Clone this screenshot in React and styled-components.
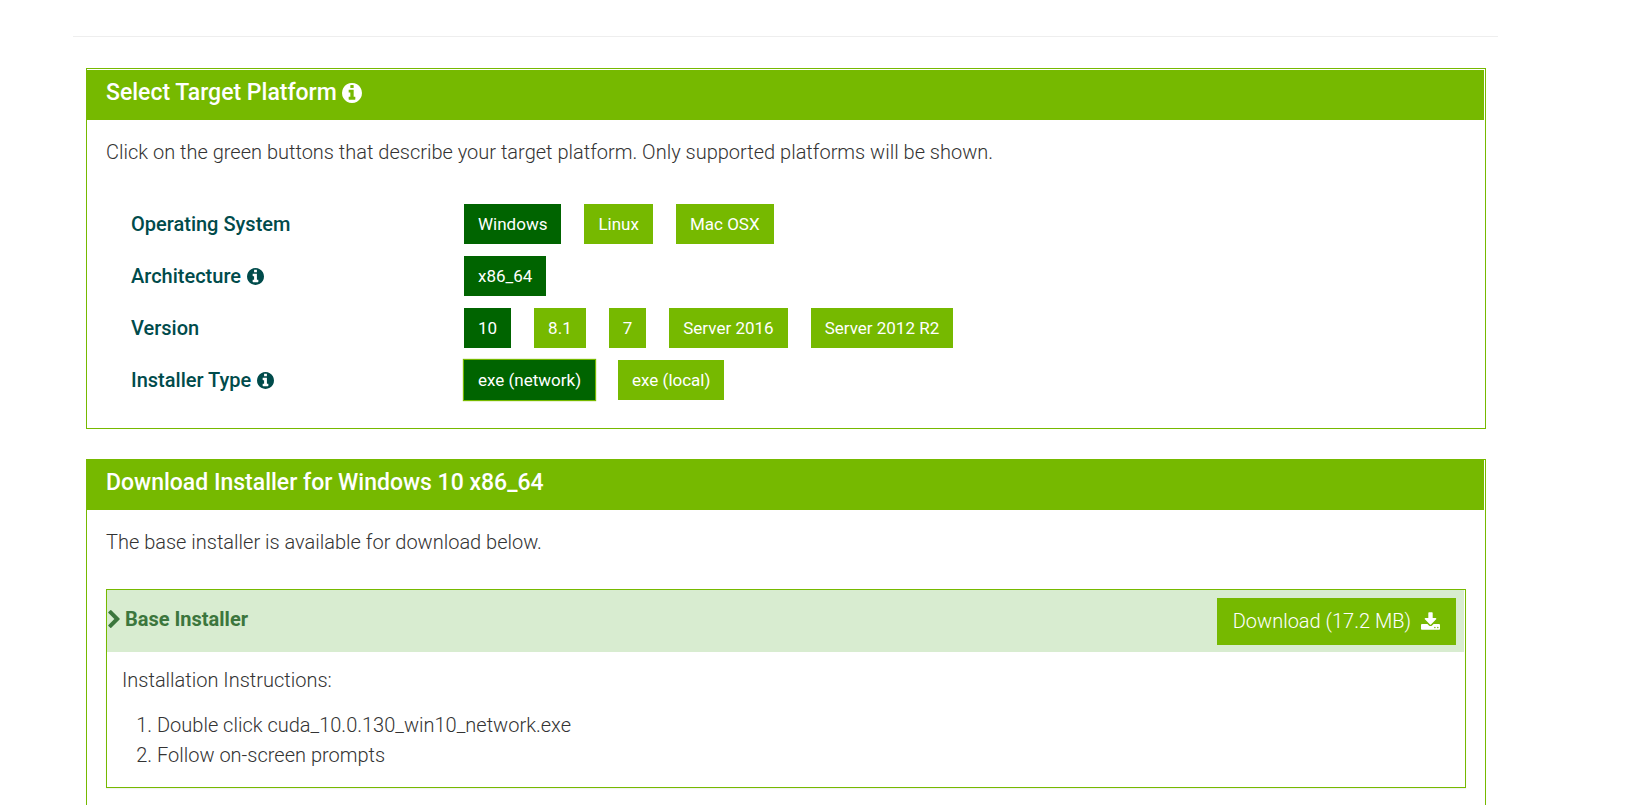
import React, { useState } from "react";
import styled, { createGlobalStyle, css } from "styled-components";

const green = "#76b900";

const GlobalStyle = createGlobalStyle`
  * { box-sizing: border-box; }
  body {
    margin: 0;
    background: #fff;
    color: #333;
    font: 300 20px/30px Roboto, "Liberation Sans", sans-serif;
  }
`;

const Page = styled.main`
  margin: 0 148px 0 73px;
  padding-top: 36px;
`;

const Divider = styled.hr`
  height: 1px;
  margin: 0 0 31px;
  border: 0;
  background: #eee;
`;

const Stack = styled.div`
  display: flex;
  flex-direction: column;
  gap: 30px;
  padding: 0 12px 0 13px;
`;

const Panel = styled.section`
  border: 1px solid ${green};
  padding: ${(p) => (p.$inset ? "1px" : "0")} 1px 0 0;
`;

const PanelTitle = styled.h2`
  display: flex;
  align-items: center;
  gap: 5px;
  height: 50px;
  margin: 0;
  padding: 0 19px 4px;
  background: ${green};
  color: #fff;
  font-size: 23px;
  font-weight: 500;
`;

const PanelBody = styled.div`
  padding: 17px 18px 28px 19px;
`;

const Lead = styled.p`
  margin: 0 0 ${(p) => p.$space};
`;

const Options = styled.div`
  display: flex;
  flex-direction: column;
  gap: 12px;
  padding-left: 25px;
`;

const OptionRow = styled.div`
  display: grid;
  grid-template-columns: 333px 1fr;
  align-items: center;
`;

const OptionLabel = styled.span`
  display: flex;
  align-items: center;
  gap: 6px;
  color: #004b4b;
  font-weight: 500;
`;

const Choices = styled.div`
  display: flex;
  flex-wrap: wrap;
  gap: 12px 23px;
`;

const Choice = styled.button`
  height: 40px;
  padding: 0 14px;
  border: 0;
  background: ${(p) => (p.$active ? "#006400" : green)};
  color: #fff;
  font: 400 17px/40px Roboto, "Liberation Sans", sans-serif;
  cursor: pointer;
  ${(p) =>
    p.$focused &&
    css`
      box-shadow: 0 0 1px 1px ${green};
    `}
  &:focus {
    outline: none;
  }
`;

const Installer = styled.article`
  border: 1px solid ${green};
  box-shadow: 0 1px 1px rgba(0, 0, 0, 0.05);
`;

const InstallerHeader = styled.header`
  display: flex;
  align-items: center;
  justify-content: space-between;
  height: 62px;
  margin-right: 1px;
  padding: 0 8px 0 1px;
  background: #d8ecd0;
`;

const InstallerTitle = styled.h3`
  display: flex;
  align-items: center;
  gap: 5px;
  margin: 0;
  padding-bottom: 4px;
  color: #3c763d;
  font-size: 20px;
  font-weight: 700;
`;

const DownloadLink = styled.a`
  display: flex;
  align-items: center;
  gap: 10px;
  height: 47px;
  padding: 0 16px;
  background: ${green};
  color: #fff;
  font-weight: 300;
  text-decoration: none;
`;

const Instructions = styled.div`
  padding: 13px 15px 17px;
`;

const Steps = styled.ol`
  margin: 0;
  padding-left: 35px;
`;

const Icon = styled.svg`
  flex: none;
  fill: currentColor;
`;

const InfoIcon = ({ size }) => (
  <Icon width={size} height={size} viewBox="0 128 1536 1536" aria-hidden="true">
    <path d="M1024 1376v-160q0-14-9-23t-23-9h-96v-512q0-14-9-23t-23-9h-320q-14 0-23 9t-9 23v160q0 14 9 23t23 9h96v320h-96q-14 0-23 9t-9 23v160q0 14 9 23t23 9h448q14 0 23-9t9-23zm-128-896v-160q0-14-9-23t-23-9h-192q-14 0-23 9t-9 23v160q0 14 9 23t23 9h192q14 0 23-9t9-23zm640 416q0 209-103 385.5t-279.5 279.5-385.5 103-385.5-103-279.5-279.5-103-385.5 103-385.5 279.5-279.5 385.5-103 385.5 103 279.5 279.5 103 385.5z" />
  </Icon>
);

const ChevronIcon = () => (
  <Icon width="12" height="18" viewBox="346 26 1036 1612" aria-hidden="true">
    <path d="M1363 877l-742 742q-19 19-45 19t-45-19l-166-166q-19-19-19-45t19-45l531-531-531-531q-19-19-19-45t19-45l166-166q19-19 45-19t45 19l742 742q19 19 19 45t-19 45z" />
  </Icon>
);

const DownloadIcon = () => (
  <Icon width="19" height="18" viewBox="64 0 1664 1536" aria-hidden="true">
    <path d="M1344 1344q0-26-19-45t-45-19-45 19-19 45 19 45 45 19 45-19 19-45zm256 0q0-26-19-45t-45-19-45 19-19 45 19 45 45 19 45-19 19-45zm128-224v320q0 40-28 68t-68 28h-1472q-40 0-68-28t-28-68v-320q0-40 28-68t68-28h465l135 136q58 56 136 56t136-56l136-136h464q40 0 68 28t28 68zm-325-569q17 41-14 70l-448 448q-18 19-45 19t-45-19l-448-448q-31-29-14-70 17-39 59-39h256v-448q0-26 19-45t45-19h256q26 0 45 19t19 45v448h256q42 0 59 39z" />
  </Icon>
);

const groups = [
  { id: "os", label: "Operating System", items: ["Windows", "Linux", "Mac OSX"] },
  { id: "arch", label: "Architecture", info: true, items: ["x86_64"] },
  { id: "version", label: "Version", items: ["10", "8.1", "7", "Server 2016", "Server 2012 R2"] },
  { id: "type", label: "Installer Type", info: true, items: ["exe (network)", "exe (local)"] },
];

export default function App() {
  const [selected, setSelected] = useState({
    os: "Windows",
    arch: "x86_64",
    version: "10",
    type: "exe (network)",
  });
  const [last, setLast] = useState("type");

  const choose = (id, item) => {
    setSelected({ ...selected, [id]: item });
    setLast(id);
  };

  return (
    <>
      <GlobalStyle />
      <Page>
        <Divider />
        <Stack>
          <Panel $inset>
            <PanelTitle>
              Select Target Platform
              <InfoIcon size={20} />
            </PanelTitle>
            <PanelBody>
              <Lead $space="37px">
                Click on the green buttons that describe your target platform. Only supported platforms will be shown.
              </Lead>
              <Options>
                {groups.map(({ id, label, info, items }) => (
                  <OptionRow key={id} role="group" aria-labelledby={id}>
                    <OptionLabel id={id}>
                      {label}
                      {info && <InfoIcon size={17} />}
                    </OptionLabel>
                    <Choices>
                      {items.map((item) => (
                        <Choice
                          key={item}
                          type="button"
                          aria-pressed={selected[id] === item}
                          $active={selected[id] === item}
                          $focused={last === id && selected[id] === item}
                          onClick={() => choose(id, item)}
                        >
                          {item}
                        </Choice>
                      ))}
                    </Choices>
                  </OptionRow>
                ))}
              </Options>
            </PanelBody>
          </Panel>

          <Panel>
            <PanelTitle>Download Installer for Windows 10 x86_64</PanelTitle>
            <PanelBody>
              <Lead $space="32px">The base installer is available for download below.</Lead>
              <Installer>
                <InstallerHeader>
                  <InstallerTitle>
                    <ChevronIcon />
                    Base Installer
                  </InstallerTitle>
                  <DownloadLink href="#download">
                    Download (17.2 MB)
                    <DownloadIcon />
                  </DownloadLink>
                </InstallerHeader>
                <Instructions>
                  <Lead $space="15px">Installation Instructions:</Lead>
                  <Steps>
                    <li>Double click cuda_10.0.130_win10_network.exe</li>
                    <li>Follow on-screen prompts</li>
                  </Steps>
                </Instructions>
              </Installer>
            </PanelBody>
          </Panel>
        </Stack>
      </Page>
    </>
  );
}
